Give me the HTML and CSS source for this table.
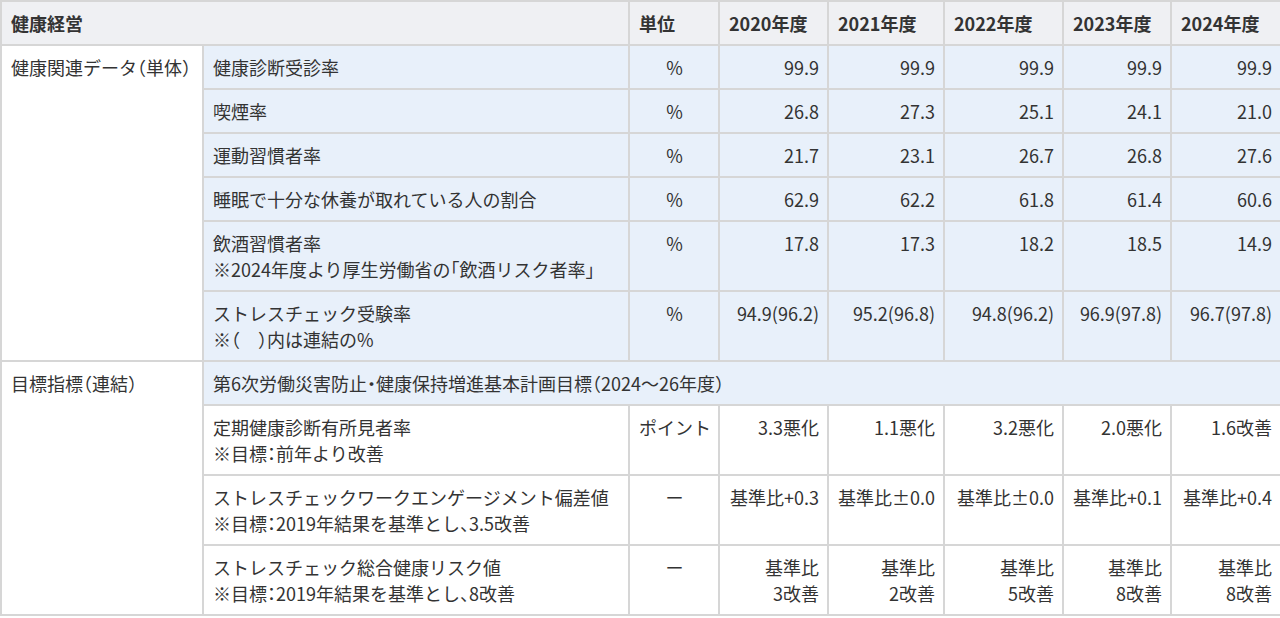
FILE: index.html
```html
<!DOCTYPE html>
<html lang="ja">
<head>
<meta charset="utf-8">
<link rel="stylesheet" href="styles.css">
</head>
<body>
<table class="data">
  <colgroup>
    <col class="c-cat"><col class="c-item"><col class="c-unit">
    <col class="c-y1"><col class="c-y2"><col class="c-y3"><col class="c-y4"><col class="c-y5">
  </colgroup>
  <thead>
    <tr>
      <th colspan="2">健康経営</th>
      <th>単位</th>
      <th>2020年度</th>
      <th>2021年度</th>
      <th>2022年度</th>
      <th>2023年度</th>
      <th>2024年度</th>
    </tr>
  </thead>
  <tbody>
    <tr class="blue">
      <td class="cat" rowspan="6">健康関連データ（単体）</td>
      <td>健康診断受診率</td>
      <td class="center">%</td>
      <td class="num">99.9</td><td class="num">99.9</td><td class="num">99.9</td><td class="num">99.9</td><td class="num">99.9</td>
    </tr>
    <tr class="blue">
      <td>喫煙率</td>
      <td class="center">%</td>
      <td class="num">26.8</td><td class="num">27.3</td><td class="num">25.1</td><td class="num">24.1</td><td class="num">21.0</td>
    </tr>
    <tr class="blue">
      <td>運動習慣者率</td>
      <td class="center">%</td>
      <td class="num">21.7</td><td class="num">23.1</td><td class="num">26.7</td><td class="num">26.8</td><td class="num">27.6</td>
    </tr>
    <tr class="blue">
      <td>睡眠で十分な休養が取れている人の割合</td>
      <td class="center">%</td>
      <td class="num">62.9</td><td class="num">62.2</td><td class="num">61.8</td><td class="num">61.4</td><td class="num">60.6</td>
    </tr>
    <tr class="blue">
      <td>飲酒習慣者率<br>※2024年度より厚生労働省の「飲酒リスク者率」</td>
      <td class="center">%</td>
      <td class="num">17.8</td><td class="num">17.3</td><td class="num">18.2</td><td class="num">18.5</td><td class="num">14.9</td>
    </tr>
    <tr class="blue">
      <td>ストレスチェック受験率<br>※（　）内は連結の%</td>
      <td class="center">%</td>
      <td class="num">94.9(96.2)</td><td class="num">95.2(96.8)</td><td class="num">94.8(96.2)</td><td class="num">96.9(97.8)</td><td class="num">96.7(97.8)</td>
    </tr>
    <tr>
      <td class="cat" rowspan="4">目標指標（連結）</td>
      <td class="blue-cell" colspan="7">第6次労働災害防止・健康保持増進基本計画目標（2024～26年度）</td>
    </tr>
    <tr>
      <td>定期健康診断有所見者率<br>※目標：前年より改善</td>
      <td class="center">ポイント</td>
      <td class="num">3.3悪化</td><td class="num">1.1悪化</td><td class="num">3.2悪化</td><td class="num">2.0悪化</td><td class="num">1.6改善</td>
    </tr>
    <tr>
      <td>ストレスチェックワークエンゲージメント偏差値<br>※目標：2019年結果を基準とし、3.5改善</td>
      <td class="center">ー</td>
      <td class="num">基準比+0.3</td><td class="num">基準比±0.0</td><td class="num">基準比±0.0</td><td class="num">基準比+0.1</td><td class="num">基準比+0.4</td>
    </tr>
    <tr>
      <td>ストレスチェック総合健康リスク値<br>※目標：2019年結果を基準とし、8改善</td>
      <td class="center">ー</td>
      <td class="num">基準比<br>3改善</td><td class="num">基準比<br>2改善</td><td class="num">基準比<br>5改善</td><td class="num">基準比<br>8改善</td><td class="num">基準比<br>8改善</td>
    </tr>
  </tbody>
</table>
</body>
</html>
```

FILE: styles.css
```css
html, body {
  margin: 0;
  padding: 0;
  background: #ffffff;
}

body {
  font-family: "Noto Sans CJK JP", "Noto Sans", sans-serif;
  font-size: 18px;
  color: #333333;
  font-feature-settings: "halt";
}

.data {
  width: 1280px;
  border-collapse: collapse;
  table-layout: fixed;
}

.c-cat { width: 202px; }
.c-item { width: 426px; }
.c-unit { width: 90px; }
.c-y1 { width: 109px; }
.c-y2 { width: 116px; }
.c-y3 { width: 119px; }
.c-y4 { width: 108px; }
.c-y5 { width: 110px; }

.data th,
.data td {
  border: 2px solid #d6d6d6;
  padding: 8px 8px 8px 9px;
  line-height: 26px;
  vertical-align: top;
  text-align: left;
  white-space: nowrap;
}

.data th {
  background: #eff0f3;
  font-weight: 700;
}

.data tr.blue td,
.data td.blue-cell {
  background: #e8f0fa;
}

.data tr.blue td.cat {
  background: #ffffff;
}

.data .center {
  text-align: center;
}

.data .num {
  text-align: right;
}
```
